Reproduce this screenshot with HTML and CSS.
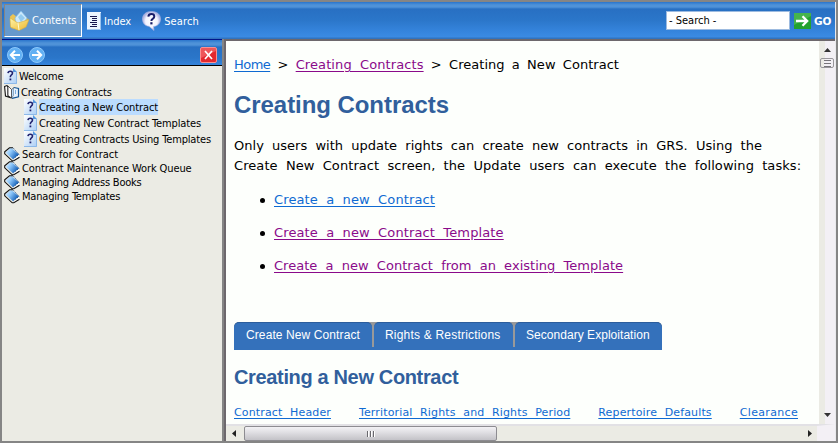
FILE: index.html
```html
<!DOCTYPE html>
<html lang="en">
<head>
<meta charset="utf-8">
<title>Creating a New Contract</title>
<link rel="stylesheet" href="styles.css">
</head>
<body>
<svg width="0" height="0" class="defs" aria-hidden="true">
  <defs>
    <linearGradient id="bookBlue" x1="0" y1="0" x2="1" y2=".6"><stop offset="0" stop-color="#f4fbff"/><stop offset=".45" stop-color="#8cc6fa"/><stop offset="1" stop-color="#0c59b4"/></linearGradient>
    <linearGradient id="page" x1="0" y1="0" x2="1" y2="1"><stop offset="0" stop-color="#fff"/><stop offset="1" stop-color="#a9cdf5"/></linearGradient>
    <linearGradient id="gold" x1="0" y1="0" x2="1" y2="1"><stop offset="0" stop-color="#fff5a8"/><stop offset="1" stop-color="#edb52c"/></linearGradient>
    <radialGradient id="bubble"><stop offset="0" stop-color="#fff"/><stop offset=".65" stop-color="#f4f4ff"/><stop offset="1" stop-color="#a9afe0"/></radialGradient>
    <symbol id="topic" viewBox="0 0 13 16"><path d="M0 0H9L13 4V16H0Z" fill="url(#page)"/><path d="M9 0V4H13Z" fill="#5597df"/><path d="M0 15.5H12.5V4" fill="none" stroke="#8cb8e8"/><path d="M4 5.2Q4.2 3.2 6.3 3.2Q8.5 3.2 8.5 5.1Q8.5 6.2 7.2 7.1Q6.3 7.8 6.3 9.2" fill="none" stroke="#20226e" stroke-width="1.6"/><rect x="5.5" y="10.5" width="1.8" height="1.8" fill="#20226e"/></symbol>
    <symbol id="book" viewBox="0 0 16 15"><path d="M1.5 5.5L7 .5L15 7.5L9.2 12.5Z" fill="url(#bookBlue)"/><path d="M9.2 12L14.8 7.8L15.3 10L9.3 14Z" fill="#fff"/><path d="M9 .8H5.5L.7 4.8V6.8L8.2 13.8H9.8L15.5 10.3" fill="none" stroke="#111" stroke-width="1.1"/><path d="M9 .8L15 7.3L9.4 12" fill="none" stroke="#1c4d86" stroke-width=".8" stroke-dasharray="1.5 1"/></symbol>
    <symbol id="openBook" viewBox="0 0 16 14"><path d="M.6 1.5L3 .6L4 2V10.5L7.5 13L1.5 11Z" fill="#fff" stroke="#111" stroke-width="1.1"/><path d="M4 1L7.5 4.5V13L4 10.5Z" fill="#fff" stroke="#333" stroke-width=".8"/><path d="M7.5 4.5L10 2.5V10.5L7.5 13Z" fill="#b8dbfb" stroke="#333" stroke-width=".6"/><path d="M10 2.5L13.8 4V11.5L8 13.2L10 10.5Z" fill="#e9f4ff"/><path d="M11.5 5V9" stroke="#79aee2"/><path d="M10 2.5L14.5 3.5V11.8L8 13.4" fill="none" stroke="#135596" stroke-width="1.2"/></symbol>
  </defs>
</svg>
<div class="window">
  <header class="toolbar">
    <div class="tool active">
      <svg class="folder" width="21" height="22" viewBox="0 0 21 22"><path d="M1 6.5L4 4L8 7L16 6L19 9L10 20L2 18Z" fill="#eac454"/><path d="M6 8L12 1L18 8L13 15L7 13Z" fill="#cdeafc" stroke="#80bce9" stroke-width=".7"/><path d="M9 7L12 4L16 8L12 12Z" fill="#93cbf0"/><path d="M1 8L9 13L20 9.5L17 17L10 20.5L1.5 17Z" fill="url(#gold)" stroke="#dbae3b" stroke-width=".6"/><path d="M9 13L10 20" stroke="#fffbd0"/></svg>
      <span class="t-contents">Contents</span>
    </div>
    <div class="tool index">
      <svg width="14" height="18" viewBox="0 0 14 18"><path d="M0 0H14V18H0Z" fill="#eaf4ff"/><path d="M13.5 1V17.5H0" fill="none" stroke="#9bc4ef"/><path d="M3 4.5H10M5 6.5H10M5 8.5H10M3 10.5H10M5 12.5H10M3 14.5H10" stroke="#16164f" stroke-width="1.1"/></svg>
      <span class="t-index">Index</span>
    </div>
    <div class="tool search">
      <svg width="19" height="20" viewBox="0 0 19 20"><path d="M9.5 .5C15 .5 18.5 3.5 18.5 8C18.5 12 16 15 11.5 15.5L12 19.5L7 15.3C3 15 .5 12 .5 8C.5 3.5 4 .5 9.5 .5Z" fill="url(#bubble)" stroke="#b6b9e6" stroke-width=".6"/><path d="M6.3 5.6Q6.6 3 9.4 3Q12.3 3 12.3 5.4Q12.3 6.8 10.7 7.8Q9.4 8.5 9.4 10" fill="none" stroke="#181c68" stroke-width="2"/><rect x="8.3" y="11.2" width="2.2" height="2.2" fill="#181c68"/></svg>
      <span class="t-search">Search</span>
    </div>
    <div class="finder">
      <div class="field"><span>- Search -</span></div>
      <svg class="go-icon" width="17" height="16" viewBox="0 0 17 16"><rect width="17" height="16" fill="#23a12e"/><path d="M0 0H17V3L0 12Z" fill="#65c465" opacity=".55"/><path d="M2 8H13M8.5 3.2L13.2 8L8.5 12.8" fill="none" stroke="#fff" stroke-width="2.3"/></svg>
      <span class="go">GO</span>
    </div>
  </header>
  <div class="body">
    <aside class="side">
      <div class="nav">
        <svg width="16" height="16" viewBox="0 0 16 16"><circle cx="8" cy="8" r="7.5" fill="#61b0f3" stroke="#8cc8fb"/><path d="M13 8H4M8 3.8L3.8 8L8 12.2" fill="none" stroke="#fff" stroke-width="2"/></svg>
        <svg width="16" height="16" viewBox="0 0 16 16"><circle cx="8" cy="8" r="7.5" fill="#61b0f3" stroke="#8cc8fb"/><path d="M3 8H12M8 3.8L12.2 8L8 12.2" fill="none" stroke="#fff" stroke-width="2"/></svg>
        <svg class="close" width="17" height="16" viewBox="0 0 17 16"><rect x=".5" y=".5" width="16" height="15" rx="1.5" fill="#e4292f" stroke="#fb9090"/><path d="M1 1H16V4L1 11Z" fill="#f57477" opacity=".6"/><path d="M5 4L12 12M12 4L5 12" stroke="#fff" stroke-width="1.7"/></svg>
      </div>
      <ul class="tree">
        <li><svg width="13" height="16"><use href="#topic"/></svg><span class="n1">Welcome</span></li>
        <li class="open"><svg width="16" height="14"><use href="#openBook"/></svg><span class="n2">Creating Contracts</span></li>
        <li class="sub"><svg width="13" height="16"><use href="#topic"/></svg><span class="n3 selected">Creating a New Contract</span></li>
        <li class="sub"><svg width="13" height="16"><use href="#topic"/></svg><span class="n4">Creating New Contract Templates</span></li>
        <li class="sub"><svg width="13" height="16"><use href="#topic"/></svg><span class="n5">Creating Contracts Using Templates</span></li>
        <li class="closed"><svg width="16" height="15"><use href="#book"/></svg><span class="n6">Search for Contract</span></li>
        <li class="closed"><svg width="16" height="15"><use href="#book"/></svg><span class="n7">Contract Maintenance Work Queue</span></li>
        <li class="closed"><svg width="16" height="15"><use href="#book"/></svg><span class="n8">Managing Address Books</span></li>
        <li class="closed"><svg width="16" height="15"><use href="#book"/></svg><span class="n9">Managing Templates</span></li>
      </ul>
    </aside>
    <main class="pane">
      <div class="view">
        <article class="content">
          <p class="crumbs"><a href="#">Home</a> &gt; <a href="#" class="visited trail">Creating Contracts</a> &gt; Creating a New Contract</p>
          <h1>Creating Contracts</h1>
          <p class="intro"><span class="l1">Only users with update rights can create new contracts in GRS. Using the</span><br><span class="l2">Create New Contract screen, the Update users can execute the following tasks:</span></p>
          <ul class="tasks">
            <li><a href="#" class="k1">Create a new Contract</a></li>
            <li><a href="#" class="visited k2">Create a new Contract Template</a></li>
            <li><a href="#" class="visited k3">Create a new Contract from an existing Template</a></li>
          </ul>
          <div class="tabs"><span class="tab tab1">Create New Contract</span><span class="tab tab2">Rights &amp; Restrictions</span><span class="tab tab3">Secondary Exploitation</span></div>
          <h2>Creating a New Contract</h2>
          <div class="links"><a href="#">Contract Header</a><a href="#">Territorial Rights and Rights Period</a><a href="#">Repertoire Defaults</a><a href="#" class="last">Clearance</a></div>
        </article>
        <div class="vbar">
          <svg width="7" height="4"><path d="M0 4L3.5 0L7 4Z" fill="#333"/></svg>
          <div class="vthumb"></div>
          <svg class="down" width="7" height="4"><path d="M0 0H7L3.5 4Z" fill="#333"/></svg>
        </div>
      </div>
      <div class="hbar">
        <svg class="left" width="4" height="7"><path d="M4 0V7L0 3.5Z" fill="#222"/></svg>
        <div class="hthumb"><i></i><i></i><i></i></div>
        <svg class="right" width="4" height="7"><path d="M0 0V7L4 3.5Z" fill="#222"/></svg>
      </div>
    </main>
  </div>
</div>
</body>
</html>
```
FILE: styles.css
```css
* { box-sizing: border-box; }
body { margin: 0; width: 838px; height: 443px; overflow: hidden; background: #858585; font-family: "DejaVu Sans Condensed", "DejaVu Sans", sans-serif; font-stretch: condensed; font-size: 11px; color: #000; }
.defs { position: absolute; }
svg { display: block; flex: none; }
ul, p, h1, h2 { margin: 0; padding: 0; }
ul { list-style: none; }
span, a { white-space: nowrap; }
.window { width: 838px; height: 443px; border: 2px solid #858585; display: flex; flex-direction: column; }
.toolbar { height: 37px; flex: none; display: flex; align-items: flex-start; padding: 2px 4px 0 2px; color: #fff; background: linear-gradient(#2975cc 0, #4f92d8 3px, #4f92d8 5px, #2870c3 7px, #2b76c9 18px, #3584dc 29px, #3b8be3 35px, #3173bf 36px); border-right: 1px solid #e9e9ec; }
.tool { display: flex; align-items: center; height: 34px; }
.tool.active { width: 78px; height: 33px; background: #6699cc; border: 1px solid #858585; border-right-color: #fff; border-bottom-color: #fff; padding-left: 4px; }
.folder { margin-right: 2px; }
.index { margin-left: 5px; gap: 3px; }
.search { margin-left: 11px; gap: 3px; }
.t-search { letter-spacing: .1px; }
.finder { margin-left: auto; display: flex; align-items: center; height: 33px; }
.field { width: 124px; height: 19px; background: #fff; border: 1px solid #9dbbe0; color: #000; padding-left: 2px; line-height: 17px; }
.go-icon { margin: 0 3px 0 4px; }
.go { font-family: "DejaVu Sans"; font-stretch: normal; font-weight: bold; font-size: 10.5px; width: 17px; }
.body { display: flex; flex: 1; min-height: 0; border-right: 1px solid #e9e9ec; }
.side { width: 220px; background: #ebebe4; border-top: 1px solid #00148c; }
.nav { height: 26px; border-bottom: 1px solid #000; padding: 4px 5px 0; display: flex; align-items: center; gap: 6px; background: linear-gradient(#2b76cc 0, #4f92d8 3px, #4f92d8 5px, #2870c3 7px, #2b76c9 18px, #3584dc 25px); }
.close { margin-left: auto; }
.tree { padding: 2px 0 0 2px; letter-spacing: -.12px; }
.tree li { display: flex; align-items: center; height: 16px; gap: 2px; }
.tree li span { line-height: 15px; }
.tree .open { height: 15px; gap: 1px; }
.tree .open span { padding-top: 1px; }
.tree .sub { padding-left: 20px; }
.tree .closed { height: 14px; }
.tree .n5 { letter-spacing: -.15px; }
.tree .n6 { letter-spacing: -.02px; }
.tree .n8, .tree .n9 { letter-spacing: -.2px; }
.tree .selected { background: #bbdcff; line-height: 15px; padding-top: 1px; }
.pane { flex: 1; min-width: 0; margin-left: 2px; border-left: 2px solid #6d686d; border-top: 2px solid #6d686d; display: flex; flex-direction: column; background: #fdfffc; }
.view { display: flex; flex: 1; min-height: 0; }
.content { flex: 1; min-width: 0; overflow: hidden; padding-left: 8px; font-family: "DejaVu Sans", sans-serif; font-stretch: normal; font-size: 13px; word-spacing: 4px; }
a { color: #0f6ad2; text-decoration: underline; text-underline-offset: 2px; }
a.visited { color: #8a0a8a; }
.crumbs { margin-top: 14px; line-height: 20px; white-space: nowrap; letter-spacing: .03px; word-spacing: 3.1px; }
.crumbs a:first-child { letter-spacing: -.55px; }
.crumbs .trail { letter-spacing: .1px; word-spacing: 4px; }
h1, h2 { font-family: "Liberation Sans", sans-serif; color: #315f9c; word-spacing: 0; white-space: nowrap; }
h1 { font-size: 24px; line-height: 28px; margin-top: 16px; letter-spacing: -.06px; }
.intro { line-height: 20px; margin-top: 17px; }
.l1 { letter-spacing: .02px; }
.l2 { letter-spacing: .08px; }
.tasks { margin-top: 14px; padding-left: 26px; }
.tasks li { height: 33px; line-height: 20px; display: flex; }
.tasks li::before { content: ""; width: 5px; height: 5px; border-radius: 50%; background: #000; margin: 8px 9px 0 0; }
.k1, .k2 { letter-spacing: .13px; }
.k3 { letter-spacing: .03px; }
.tabs { display: flex; margin-top: 33px; width: 428px; height: 28px; font: 12px/25px "Liberation Sans", sans-serif; word-spacing: 0; color: #fff; background: #999; border-radius: 5px 5px 0 0; border-bottom: 3px solid #3471bb; }
.tab { height: 28px; background: #3471bb; border-radius: 5px 5px 0 0; padding-left: 12px; border-top: 1px solid #2b5d9c; flex: none; }
.tab1 { width: 138px; margin-right: 2px; letter-spacing: .1px; }
.tab2 { width: 139px; margin-right: 2px; padding-left: 11px; letter-spacing: .2px; }
.tab3 { width: 147px; padding-left: 11px; letter-spacing: .04px; }
h2 { font-size: 20px; line-height: 24px; margin-top: 15px; letter-spacing: -.35px; }
.links { display: flex; margin-top: 15px; gap: 28px; font-size: 11px; line-height: 18px; letter-spacing: .14px; }
.links .last { letter-spacing: .33px; }
.vbar { width: 16px; flex: none; background: linear-gradient(90deg, #ebebe4 0 6px, #f3f0f5 6px); display: flex; flex-direction: column; align-items: center; padding: 7px 0; }
.vthumb { width: 14px; height: 10px; margin-top: 6px; border: 1px solid #99979c; border-radius: 2px; background: repeating-linear-gradient(#77757a 0 1px, #f3f0f5 1px 3px) 3px 1px / 7px 7px no-repeat; }
.down { margin-top: auto; }
.hbar { height: 17px; border-top: 2px solid #e2e1e5; background: #ebebe4; display: flex; align-items: center; padding-left: 6px; border-right: 18px solid #f3f0f5; }
.hthumb { margin-left: 8px; width: 253px; height: 15px; border: 1px solid #8d8c91; border-radius: 2px; background: linear-gradient(#f3f2f5, #dedde1 45%, #c3c2c7); display: flex; justify-content: center; align-items: center; gap: 1px; }
.hthumb i { width: 2px; height: 6px; background: #69686d; border-right: 1px solid #fff; }
.right { margin-left: auto; margin-right: 5px; }
```
